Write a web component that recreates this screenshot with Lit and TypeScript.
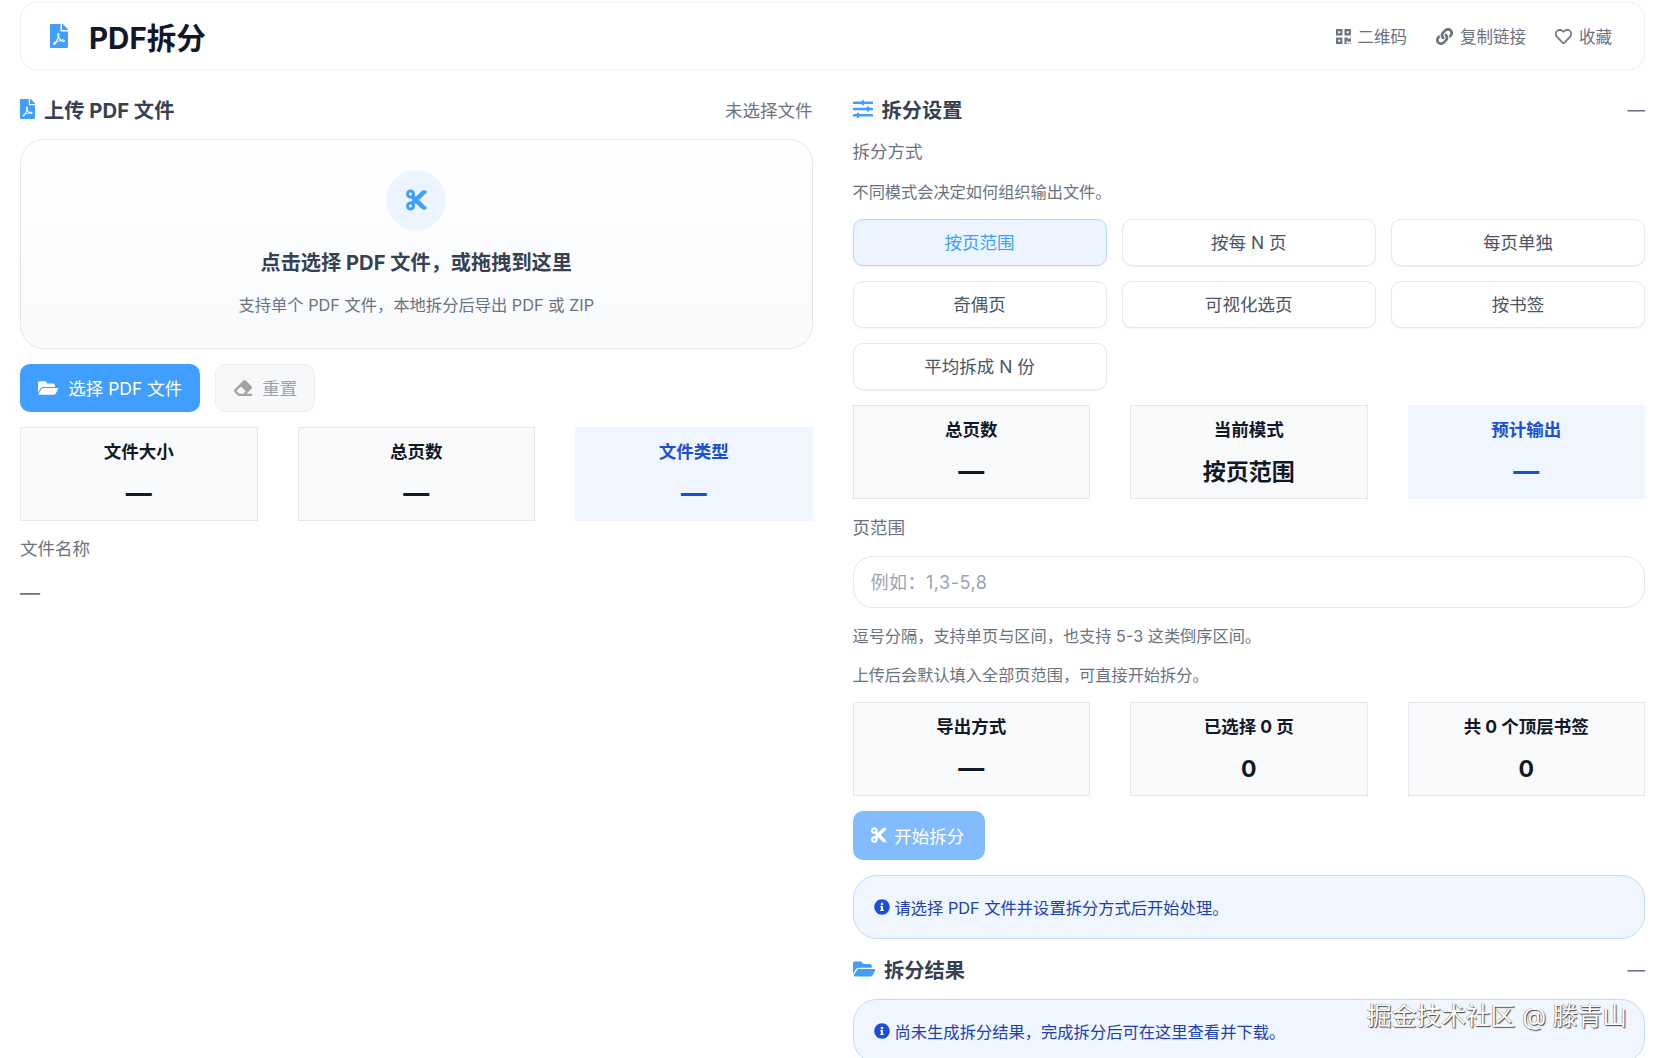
import { LitElement, html, css, svg } from "lit";
import { customElement } from "lit/decorators.js";

const ICONS: Record<string, [number, string]> = {
  pdf: [384, "M181.9 256.1c-5-16-4.9-46.9-2-46.9 8.4 0 7.6 36.9 2 46.9zm-1.7 47.2c-7.7 20.2-17.3 43.3-28.4 62.7 18.3-7 39-17.2 62.9-21.9-12.7-9.6-24.9-23.4-34.5-40.8zM86.1 428.1c0 .8 13.2-5.4 34.9-40.2-6.7 6.3-29.1 24.5-34.9 40.2zM248 160h136v328c0 13.3-10.7 24-24 24H24c-13.3 0-24-10.7-24-24V24C0 10.7 10.7 0 24 0h200v136c0 13.2 10.8 24 24 24zm-8 171.8c-20-12.2-33.3-29-42.7-53.8 4.5-18.5 11.6-46.6 6.2-64.2-4.7-29.4-42.4-26.5-47.8-6.8-5 18.3-.4 44.1 8.1 77-11.6 27.6-28.7 64.6-40.8 85.8-.1 0-.1.1-.2.1-27.1 13.9-73.6 44.5-54.5 68 5.6 6.9 16 10 21.5 10 17.9 0 35.7-18 61.1-61.8 25.8-8.5 54.1-19.1 79-23.2 21.7 11.8 47.1 19.5 64 19.5 29.2 0 31.2-32 19.7-43.4-13.9-13.6-54.3-9.7-73.6-7.2zM377 105L279 7c-4.5-4.5-10.6-7-17-7h-6v128h128v-6.1c0-6.3-2.5-12.4-7-16.9zm-74.1 255.3c4.1-2.7-2.5-11.9-42.8-9 37.1 15.8 42.8 9 42.8 9z"],
  scissors: [448, "M278.06 256L444.48 89.57c4.69-4.69 4.69-12.29 0-16.97-32.8-32.8-85.99-32.8-118.79 0L210.18 188.12l-24.86-24.86c4.31-10.92 6.68-22.81 6.68-35.26 0-53.02-42.98-96-96-96S0 74.98 0 128s42.98 96 96 96c4.54 0 8.99-.32 13.36-.93L142.29 256l-32.93 32.93c-4.37-.61-8.83-.93-13.36-.93-53.02 0-96 42.98-96 96s42.98 96 96 96 96-42.98 96-96c0-12.45-2.37-24.34-6.68-35.26l24.86-24.86L325.69 439.4c32.8 32.8 85.99 32.8 118.79 0 4.69-4.68 4.69-12.28 0-16.97L278.06 256zM96 160c-17.64 0-32-14.36-32-32s14.36-32 32-32 32 14.36 32 32-14.36 32-32 32zm0 256c-17.64 0-32-14.36-32-32s14.36-32 32-32 32 14.36 32 32-14.36 32-32 32z"],
  folder: [576, "M572.694 292.093L500.27 416.248A63.997 63.997 0 0 1 444.989 448H45.025c-18.523 0-30.064-20.093-20.731-36.093l72.424-124.155A64 64 0 0 1 152 256h399.964c18.523 0 30.064 20.093 20.73 36.093zM152 224h328v-48c0-26.51-21.49-48-48-48H272l-64-64H48C21.49 64 0 85.49 0 112v278.046l69.077-118.418C86.214 242.25 117.989 224 152 224z"],
  eraser: [512, "M497.941 273.941c18.745-18.745 18.745-49.137 0-67.882l-160-160c-18.745-18.745-49.137-18.746-67.882 0l-256 256c-18.745 18.745-18.745 49.137 0 67.882l96 96A48.004 48.004 0 0 0 144 480h356c6.627 0 12-5.373 12-12v-40c0-6.627-5.373-12-12-12H355.883l142.058-142.059zm-302.627-62.627l137.373 137.373L265.373 416H150.628l-80-80 124.686-124.686z"],
  sliders: [512, "M496 384H160v-16c0-8.8-7.2-16-16-16h-32c-8.8 0-16 7.2-16 16v16H16c-8.8 0-16 7.2-16 16v32c0 8.8 7.2 16 16 16h80v16c0 8.8 7.2 16 16 16h32c8.8 0 16-7.2 16-16v-16h336c8.8 0 16-7.2 16-16v-32c0-8.8-7.2-16-16-16zm0-160h-80v-16c0-8.8-7.2-16-16-16h-32c-8.8 0-16 7.2-16 16v16H16c-8.8 0-16 7.2-16 16v32c0 8.8 7.2 16 16 16h336v16c0 8.8 7.2 16 16 16h32c8.8 0 16-7.2 16-16v-16h80c8.8 0 16-7.2 16-16v-32c0-8.8-7.2-16-16-16zm0-160H288V48c0-8.8-7.2-16-16-16h-32c-8.8 0-16 7.2-16 16v16H16C7.2 64 0 71.2 0 80v32c0 8.8 7.2 16 16 16h208v16c0 8.8 7.2 16 16 16h32c8.8 0 16-7.2 16-16v-16h208c8.8 0 16-7.2 16-16V80c0-8.8-7.2-16-16-16z"],
  info: [512, "M256 8C119.043 8 8 119.083 8 256c0 136.997 111.043 248 248 248s248-111.003 248-248C504 119.083 392.957 8 256 8zm0 110c23.196 0 42 18.804 42 42s-18.804 42-42 42-42-18.804-42-42 18.804-42 42-42zm56 254c0 6.627-5.373 12-12 12h-88c-6.627 0-12-5.373-12-12v-24c0-6.627 5.373-12 12-12h12v-64h-12c-6.627 0-12-5.373-12-12v-24c0-6.627 5.373-12 12-12h64c6.627 0 12 5.373 12 12v100h12c6.627 0 12 5.373 12 12v24z"],
  link: [512, "M326.612 185.391c59.747 59.809 58.927 155.698.36 214.59-.11.12-.24.25-.36.37l-67.2 67.2c-59.27 59.27-155.699 59.262-214.96 0-59.27-59.26-59.27-155.7 0-214.96l37.106-37.106c9.84-9.84 26.786-3.3 27.294 10.606.648 17.722 3.826 35.527 9.69 52.721 1.986 5.822.567 12.262-3.783 16.612l-13.087 13.087c-28.026 28.026-28.905 73.66-1.155 101.96 28.024 28.579 74.086 28.749 102.325.51l67.2-67.19c28.191-28.191 28.073-73.757 0-101.83-3.701-3.694-7.429-6.564-10.341-8.569a16.037 16.037 0 0 1-6.947-12.606c-.396-10.567 3.348-21.456 11.698-29.806l21.054-21.055c5.521-5.521 14.182-6.199 20.584-1.731a152.482 152.482 0 0 1 20.522 17.197zM467.547 44.449c-59.261-59.262-155.69-59.27-214.96 0l-67.2 67.2c-.12.12-.25.25-.36.37-58.566 58.892-59.387 154.781.36 214.59a152.454 152.454 0 0 0 20.521 17.196c6.402 4.468 15.064 3.789 20.584-1.731l21.054-21.055c8.35-8.35 12.094-19.239 11.698-29.806a16.037 16.037 0 0 0-6.947-12.606c-2.912-2.005-6.64-4.875-10.341-8.569-28.073-28.073-28.191-73.639 0-101.83l67.2-67.19c28.239-28.239 74.3-28.069 102.325.51 27.75 28.3 26.872 73.934-1.155 101.96l-13.087 13.087c-4.35 4.35-5.769 10.79-3.783 16.612 5.864 17.194 9.042 34.999 9.69 52.721.509 13.906 17.454 20.446 27.294 10.606l37.106-37.106c59.271-59.259 59.271-155.699.001-214.959z"],
  qr: [448, "M0 224h192V32H0v192zM64 96h64v64H64V96zm192-64v192h192V32H256zm128 128h-64V96h64v64zM0 480h192V288H0v192zm64-128h64v64H64v-64zm352-64h32v128h-96v-32h-32v96h-64V288h96v32h64v-32zm0 160h32v32h-32v-32zm-64 0h32v32h-32v-32z"],
  heart: [512, "M458.4 64.3C400.6 15.7 311.3 23 256 79.3 200.7 23 111.4 15.6 53.6 64.3-21.6 127.6-10.6 230.8 43 285.5l175.4 178.7c10 10.2 23.4 15.9 37.6 15.9 14.3 0 27.6-5.6 37.6-15.8L469 285.6c53.5-54.7 64.7-157.9-10.6-221.3zm-23.6 187.5L259.4 430.5c-2.4 2.4-4.4 2.4-6.8 0L77.2 251.8c-36.5-37.2-43.9-107.6 7.3-150.7 38.9-32.7 98.9-27.8 136.5 10.5l35 35.7 35-35.7c37.8-38.5 97.8-43.2 136.5-10.6 51.1 43.1 43.5 113.9 7.3 150.8z"],
};

const icon = (name: string) => {
  const [w, d] = ICONS[name];
  return svg`<svg class="ic" viewBox="0 0 ${w} 512" fill="currentColor"><path d=${d}></path></svg>`;
};

const MODES = ["按页范围", "按每 N 页", "每页单独", "奇偶页", "可视化选页", "按书签", "平均拆成 N 份"];

type Stat = { label: string; value: string; accent?: boolean };

@customElement("app-root")
export class AppRoot extends LitElement {
  private stats(items: Stat[]) {
    return html`<div class="stats">
      ${items.map(
        (s) => html`<div class="stat ${s.accent ? "accent" : ""}">
          <div class="stat-label">${s.label}</div>
          <div class="stat-value ${s.value === "—" ? "dash" : ""}">${s.value}</div>
        </div>`
      )}
    </div>`;
  }

  private sectionHead(ic: string, title: string, right: string) {
    return html`<div class="head">
      <h2>${icon(ic)}<span>${title}</span></h2>
      <span class="head-right">${right}</span>
    </div>`;
  }

  override render() {
    return html`
      <header class="topbar">
        <h1>${icon("pdf")}<span>PDF拆分</span></h1>
        <nav>
          <a>${icon("qr")}二维码</a>
          <a>${icon("link")}复制链接</a>
          <a>${icon("heart")}收藏</a>
        </nav>
      </header>
      <main>
        <section class="col">
          ${this.sectionHead("pdf", "上传 PDF 文件", "未选择文件")}
          <div class="drop">
            <div class="drop-icon">${icon("scissors")}</div>
            <div class="drop-title">点击选择 PDF 文件，或拖拽到这里</div>
            <div class="drop-sub">支持单个 PDF 文件，本地拆分后导出 PDF 或 ZIP</div>
          </div>
          <div class="actions">
            <button class="btn primary">${icon("folder")}选择 PDF 文件</button>
            <button class="btn reset">${icon("eraser")}重置</button>
          </div>
          ${this.stats([
            { label: "文件大小", value: "—" },
            { label: "总页数", value: "—" },
            { label: "文件类型", value: "—", accent: true },
          ])}
          <div class="label">文件名称</div>
          <div class="filename">—</div>
        </section>
        <section class="col">
          ${this.sectionHead("sliders", "拆分设置", "—")}
          <div class="label">拆分方式</div>
          <div class="hint">不同模式会决定如何组织输出文件。</div>
          <div class="modes">
            ${MODES.map((m, i) => html`<button class="mode ${i === 0 ? "active" : ""}">${m}</button>`)}
          </div>
          ${this.stats([
            { label: "总页数", value: "—" },
            { label: "当前模式", value: "按页范围" },
            { label: "预计输出", value: "—", accent: true },
          ])}
          <div class="label range-label">页范围</div>
          <input class="range" placeholder="例如：1,3-5,8" />
          <div class="hint">逗号分隔，支持单页与区间，也支持 5-3 这类倒序区间。</div>
          <div class="hint">上传后会默认填入全部页范围，可直接开始拆分。</div>
          ${this.stats([
            { label: "导出方式", value: "—" },
            { label: "已选择 0 页", value: "0" },
            { label: "共 0 个顶层书签", value: "0" },
          ])}
          <div class="actions">
            <button class="btn start">${icon("scissors")}开始拆分</button>
          </div>
          <div class="alert">${icon("info")}请选择 PDF 文件并设置拆分方式后开始处理。</div>
          ${this.sectionHead("folder", "拆分结果", "—")}
          <div class="alert">${icon("info")}尚未生成拆分结果，完成拆分后可在这里查看并下载。</div>
        </section>
      </main>
      <div class="watermark">掘金技术社区 @ 滕青山</div>
    `;
  }

  static styles = css`
    :host {
      display: block;
      position: relative;
      height: 100vh;
      overflow: hidden;
      box-sizing: border-box;
      padding: 2px 9px 0 20px;
      background: #fff;
      color: #374151;
      font-family: Inter, "Noto Sans CJK SC", sans-serif;
    }
    .ic { height: 1em; width: auto; flex: none; display: block; }

    .topbar {
      display: flex;
      align-items: center;
      justify-content: space-between;
      height: 68px;
      box-sizing: border-box;
      padding: 0 32px 0 29px;
      border: 1px solid #eef0f3;
      border-radius: 16px;
    }
    h1 {
      display: flex;
      align-items: center;
      gap: 21px;
      margin: 0;
      font-size: 29.5px;
      font-weight: 700;
      color: #111827;
    }
    h1 .ic { color: #409eff; height: 24px; }
    nav { display: flex; gap: 29px; }
    nav a {
      display: flex;
      align-items: center;
      gap: 7px;
      font-size: 16.5px;
      color: #6b7280;
    }
    nav .ic { height: 17px; }

    main {
      display: grid;
      grid-template-columns: 1fr 1fr;
      gap: 40px;
      padding-top: 24px;
    }
    .col { display: flex; flex-direction: column; gap: 15px; min-width: 0; }

    .head { display: flex; align-items: center; justify-content: space-between; height: 30px; }
    h2 {
      display: flex;
      align-items: center;
      gap: 9px;
      margin: 0;
      font-size: 20.3px;
      font-weight: 700;
      color: #374151;
    }
    h2 .ic { color: #409eff; height: 20px; }
    .head-right { font-size: 17.5px; color: #6b7280; }

    .drop {
      height: 210px;
      box-sizing: border-box;
      padding-top: 30px;
      display: flex;
      flex-direction: column;
      align-items: center;
      border: 1px solid #e5e7eb;
      border-radius: 24px;
      background: linear-gradient(180deg, #fff, #f8fafc);
    }
    .drop-icon {
      width: 60px;
      height: 60px;
      border-radius: 50%;
      background: #ecf5ff;
      color: #409eff;
      display: flex;
      align-items: center;
      justify-content: center;
      font-size: 24px;
    }
    .drop-title { margin-top: 19px; font-size: 20.2px; font-weight: 700; line-height: 28px; color: #374151; }
    .drop-sub { margin-top: 14px; font-size: 16.3px; line-height: 28px; color: #6b7280; }

    .actions { display: flex; gap: 15px; }
    .btn {
      display: flex;
      align-items: center;
      gap: 10px;
      height: 48px;
      box-sizing: border-box;
      padding-bottom: 2px;
      border-radius: 10px;
      border: 1px solid transparent;
      font: inherit;
      font-size: 17.5px;
    }
    .btn .ic { height: 18px; }
    .primary { padding-left: 17px; padding-right: 17px; background: #409eff; color: #fff; }
    .reset { padding-left: 18px; padding-right: 17px; background: #f7f8fa; border-color: #eceef1; color: #9ca3af; }
    .reset .ic { color: #a3a3a3; }
    .start { height: 49px; padding-left: 17px; padding-right: 20px; gap: 8px; background: #82bcfe; color: #fff; }

    .stats { display: grid; grid-template-columns: repeat(3, 1fr); gap: 40px; }
    .stat {
      height: 94px;
      box-sizing: border-box;
      padding-top: 11px;
      text-align: center;
      background: #f8fafc;
      border: 1px solid #e5e7eb;
      color: #111827;
    }
    .stat.accent { background: #eff6ff; border-color: #eff6ff; color: #1d4ed8; }
    .stat-label { font-size: 17.5px; font-weight: 700; line-height: 26px; }
    .stat-value { margin-top: 13px; font-size: 23px; font-weight: 700; line-height: 32px; }
    .stat-value.dash { font-size: 26px; line-height: 30px; }

    .label { font-size: 17.5px; line-height: 26px; color: #6b7280; }
    .range-label { margin-top: 1px; }
    .filename { margin-top: 2px; font-size: 20px; line-height: 28px; color: #6b7280; }
    .hint { font-size: 16.2px; line-height: 24px; color: #6b7280; }

    .modes { display: grid; grid-template-columns: repeat(3, 1fr); gap: 15px; }
    .mode {
      height: 47px;
      padding-bottom: 3px;
      border: 1px solid #e5e7eb;
      border-radius: 10px;
      background: #fff;
      box-shadow: 0 1px 2px rgba(0, 0, 0, 0.05);
      font: inherit;
      font-size: 17.5px;
      color: #4b5563;
    }
    .mode.active { background: #ecf5ff; border-color: #b3d8ff; color: #409eff; }

    .range {
      height: 52px;
      box-sizing: border-box;
      margin-bottom: 1px;
      padding: 0 17px;
      border: 1px solid #e5e7eb;
      border-radius: 20px;
      font: inherit;
      font-size: 18px;
      letter-spacing: 0.5px;
      outline: none;
    }
    .range::placeholder { color: #9ca3af; }

    .alert {
      display: flex;
      align-items: center;
      gap: 5px;
      flex: none;
      height: 64px;
      box-sizing: border-box;
      padding: 0 20px;
      border: 1px solid #bfdbfe;
      border-radius: 24px;
      background: #eff6ff;
      color: #1e40af;
      font-size: 16.3px;
    }
    .alert .ic { color: #1d4ed8; height: 16px; }

    .watermark {
      position: absolute;
      right: 27px;
      bottom: 25px;
      font-size: 24.7px;
      line-height: 34px;
      color: #fff;
      text-shadow: 1px 1px 1px #444, -0.5px -0.5px 0 #777;
    }
  `;
}
